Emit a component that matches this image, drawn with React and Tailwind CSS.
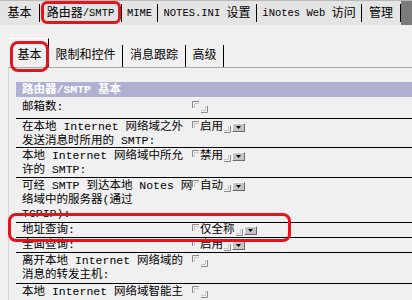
import React from "react";

function OpenMark() {
  return (
    <svg width="7" height="7" viewBox="0 0 7 7" className="shrink-0 self-start mt-[1px]">
      <path d="M0.5 7V0.5H7" stroke="#8a8a8a" fill="none" />
      <path d="M2.5 7V2.5H7" stroke="#c8c8c8" fill="none" />
    </svg>
  );
}

function CloseMark() {
  return (
    <svg width="7" height="7" viewBox="0 0 7 7" className="shrink-0 self-end mb-[1px]">
      <path d="M6.5 0V6.5H0" stroke="#8a8a8a" fill="none" />
      <path d="M4.5 0V4.5H0" stroke="#c8c8c8" fill="none" />
    </svg>
  );
}

function DropButton() {
  return (
    <span className="self-end mb-[2px] ml-[1px] flex items-center justify-center w-[13px] h-[9px] bg-[#c4c4c4] border border-t-white border-l-white border-b-[#6a6a6a] border-r-[#6a6a6a]">
      <svg width="5" height="3" viewBox="0 0 5 3">
        <path d="M0 0H5L2.5 3Z" fill="#000" />
      </svg>
    </span>
  );
}

function Field({ value, drop }) {
  return (
    <div className="flex h-[14px] items-stretch">
      <OpenMark />
      {value ? (
        <span className="ml-[1px] leading-[14px] whitespace-nowrap">{value}</span>
      ) : (
        <span className="w-[1px]" />
      )}
      <span className="ml-[1px] flex">
        <CloseMark />
      </span>
      {drop ? <DropButton /> : null}
    </div>
  );
}

function Row({ lines, value, drop, h, pt, last }) {
  return (
    <div className={`flex ${last ? "" : "border-b border-black"} ${h} ${pt}`}>
      <div className="w-[176px] shrink-0 pl-[6px]">
        {lines.map((l, i) => (
          <div key={i} className="h-[14px] leading-[14px] whitespace-nowrap">
            {l}
          </div>
        ))}
      </div>
      <div className="flex">
        <Field value={value} drop={drop} />
      </div>
    </div>
  );
}

function Sep() {
  return <div className="w-px my-[3px] bg-black shrink-0" />;
}

function TopTab({ w, children }) {
  return (
    <div className={`${w} shrink-0 flex items-center justify-center pt-[2px] whitespace-nowrap text-[12px]`}>
      {children}
    </div>
  );
}

export default function App() {
  return (
    <div className="relative w-[412px] h-[300px] overflow-hidden bg-[#f0f0f0] text-black text-[11.5px] font-['Liberation_Mono','Noto_Sans_CJK_SC',monospace]">
      {/* top tabs */}
      <div className="flex h-[25px] bg-[#e4e4e4] border-t border-[#b8b8b8]">
        <TopTab w="w-[39px]">基本</TopTab>
        <Sep />
        <TopTab w="w-[81px]">
          路由器<span className="text-[10.5px]">/SMTP</span>
        </TopTab>
        <Sep />
        <TopTab w="w-[35px]">
          <span className="text-[10.5px]">MIME</span>
        </TopTab>
        <Sep />
        <TopTab w="w-[98px]">
          <span className="text-[10.5px]">NOTES.INI&nbsp;</span>设置
        </TopTab>
        <Sep />
        <TopTab w="w-[104px]">
          <span className="text-[10.5px]">iNotes Web&nbsp;</span>访问
        </TopTab>
        <Sep />
        <TopTab w="w-[38px]">管理</TopTab>
        <Sep />
        <div className="flex-1 bg-[#7b7b7b]" />
      </div>

      {/* second tabs */}
      <div className="flex items-end h-[43px] ml-[8px] pl-[2px] border-b border-[#a9a9a9] text-[12px]">
        <div className="w-[39px] h-[29px] border-l border-t border-white border-r border-r-black flex items-center justify-center pt-[6px]">
          基本
        </div>
        <div className="w-[74px] h-[22px] border-r border-black flex items-center justify-center">
          限制和控件
        </div>
        <div className="w-[63px] h-[22px] border-r border-black flex items-center justify-center">
          消息跟踪
        </div>
        <div className="w-[38px] h-[22px] border-r border-black flex items-center justify-center">
          高级
        </div>
      </div>

      {/* panel */}
      <div className="ml-[8px] h-[240px] border-l border-[#d6d6d6] pl-[7px] pt-[14px]">
        <div className="h-[15px] bg-[#b0b0d2] text-white font-bold pl-[6px] leading-[15px] whitespace-nowrap">
          路由器/SMTP 基本
        </div>
        <Row lines={["邮箱数:"]} h="h-[22px]" pt="pt-[3px]" />
        <Row
          lines={["在本地 Internet 网络域之外", "发送消息时所用的 SMTP:"]}
          value="启用"
          drop
          h="h-[29px]"
          pt="pt-[1px]"
        />
        <Row
          lines={["本地 Internet 网络域中所允", "许的 SMTP:"]}
          value="禁用"
          drop
          h="h-[30px]"
          pt="pt-[1px]"
        />
        <Row
          lines={["可经 SMTP 到达本地 Notes 网", "络域中的服务器(通过", "TCPIP):"]}
          value="自动"
          drop
          h="h-[45px]"
          pt="pt-[1px]"
        />
        <Row lines={["地址查询:"]} value="仅全称" drop h="h-[15px]" pt="pt-0" />
        <Row lines={["全面查询:"]} value="启用" drop h="h-[15px]" pt="pt-0" />
        <Row
          lines={["离开本地 Internet 网络域的", "消息的转发主机:"]}
          h="h-[31px]"
          pt="pt-[1px]"
        />
        <Row lines={["本地 Internet 网络域智能主"]} h="h-[16px]" pt="pt-[1px]" last />
      </div>

      {/* annotations */}
      <div className="absolute left-[41px] top-[1px] w-[80px] h-[23px] border-[3px] border-[#e3141c] rounded-[6px]" />
      <div className="absolute left-[10px] top-[41px] w-[39px] h-[31px] border-[3px] border-[#e3141c] rounded-[8px]" />
      <div className="absolute left-[8px] top-[213px] w-[283px] h-[29px] border-[3px] border-[#e3141c] rounded-[8px]" />
    </div>
  );
}
